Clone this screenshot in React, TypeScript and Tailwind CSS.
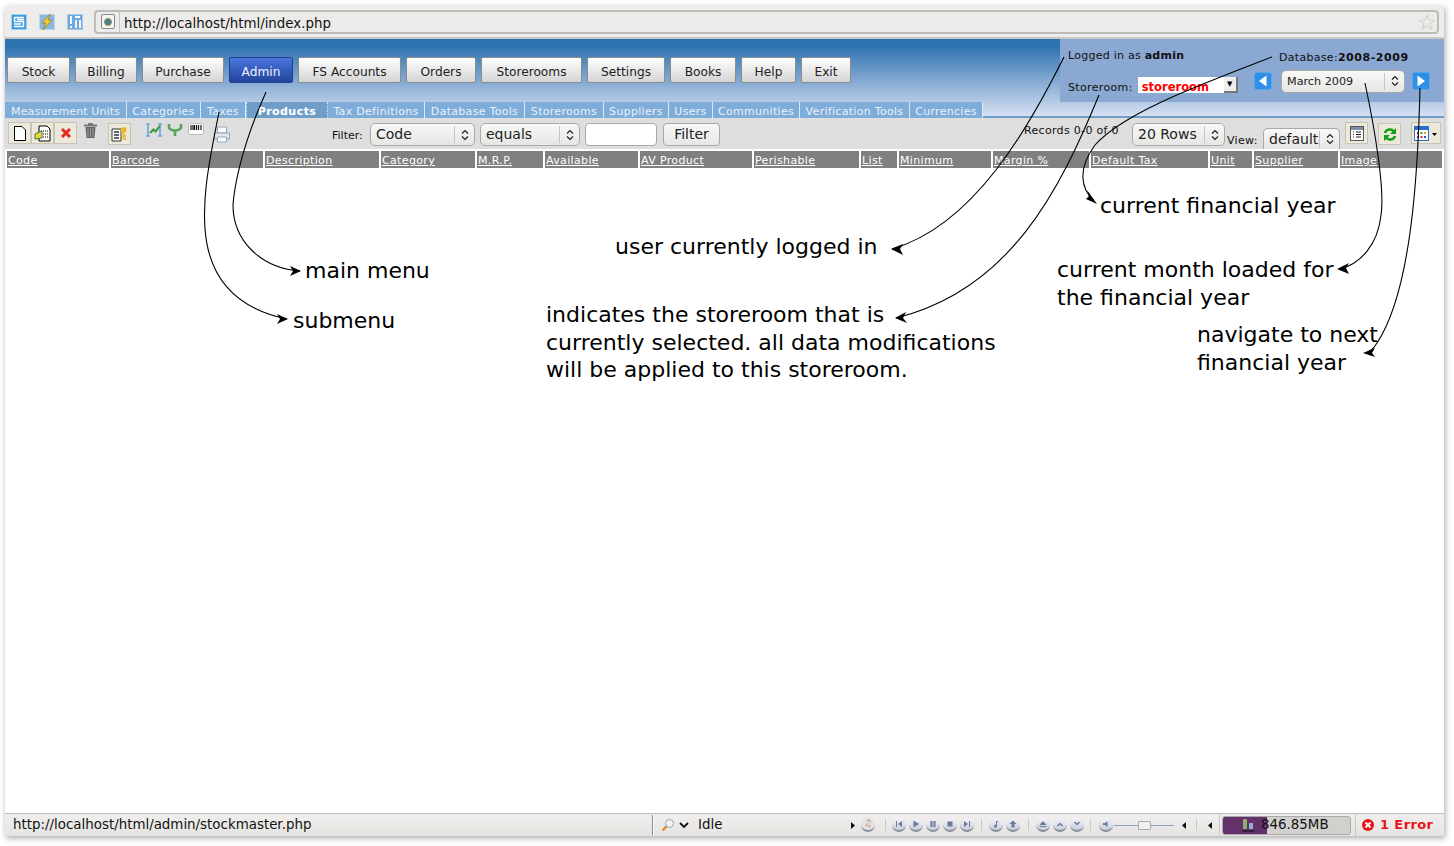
import type { ReactNode } from 'react';

const menuItems = [
  { label: 'Stock', width: 'w-[63px]' },
  { label: 'Billing', width: 'w-[62px]' },
  { label: 'Purchase', width: 'w-[82px]' },
  { label: 'Admin', width: 'w-[64px]', active: true },
  { label: 'FS Accounts', width: 'w-[103px]' },
  { label: 'Orders', width: 'w-[70px]' },
  { label: 'Storerooms', width: 'w-[101px]' },
  { label: 'Settings', width: 'w-[78px]' },
  { label: 'Books', width: 'w-[66px]' },
  { label: 'Help', width: 'w-[55px]' },
  { label: 'Exit', width: 'w-[50px]' },
];

const subItems = [
  { label: 'Measurement Units', width: 'w-[122px] tracking-[0.1px]' },
  { label: 'Categories', width: 'w-[74px] tracking-[0.3px]' },
  { label: 'Taxes', width: 'w-[45px] tracking-[0.3px]' },
  { label: 'Products', width: 'w-[82px] tracking-[0.45px]', active: true },
  { label: 'Tax Definitions', width: 'w-[97px] tracking-[0.3px]' },
  { label: 'Database Tools', width: 'w-[100px] tracking-[0.3px]' },
  { label: 'Storerooms', width: 'w-[79px] tracking-[0.3px]' },
  { label: 'Suppliers', width: 'w-[65px] tracking-[0.3px]' },
  { label: 'Users', width: 'w-[44px] tracking-[0.3px]' },
  { label: 'Communities', width: 'w-[87px] tracking-[0.3px]' },
  { label: 'Verification Tools', width: 'w-[110px] tracking-[0.3px]' },
  { label: 'Currencies', width: 'w-[73px] tracking-[0.3px]' },
];

const columns = [
  'Code', 'Barcode', 'Description', 'Category', 'M.R.P.', 'Available', 'AV Product', 'Perishable',
  'List', 'Minimum', 'Margin %', 'Default Tax', 'Unit', 'Supplier', 'Image',
];

const notes = [
  { text: 'main menu', className: 'left-[305px] top-[257px]' },
  { text: 'submenu', className: 'left-[293px] top-[307px]' },
  { text: 'user currently logged in', className: 'left-[615px] top-[233px]' },
  { text: 'indicates the storeroom that is\ncurrently selected. all data modifications\nwill be applied to this storeroom.', className: 'left-[546px] top-[301px]' },
  { text: 'current financial year', className: 'left-[1100px] top-[192px]' },
  { text: 'current month loaded for\nthe financial year', className: 'left-[1057px] top-[256px]' },
  { text: 'navigate to next\nfinancial year', className: 'left-[1197px] top-[321px]' },
];

const arrows = [
  { d: 'M219 112 C204 190 176 296 287 319', head: '288,319 277,314 280,319 277,324' },
  { d: 'M266 92 C240 150 234 190 233 205 C233 240 260 268 300 271', head: '301,271 290,266 293,271 290,276' },
  { d: 'M1064 57 C1030 125 975 225 892 249', head: '891,249 903,244 900,249 903,255' },
  { d: 'M1099 95 C1060 190 1010 290 896 318', head: '895,318 906,312 903,318 907,323' },
  { d: 'M1272 57 C1200 85 1125 112 1095 145 C1078 168 1080 188 1094 201', head: '1097,204 1086,199 1089,196 1087,190' },
  { d: 'M1365 83 C1375 130 1385 190 1381 215 C1378 245 1360 264 1340 269', head: '1337,269 1349,263 1346,268 1349,274' },
  { d: 'M1420 88 C1418 170 1412 290 1377 343 C1373 349 1371 351 1366 353', head: '1363,353 1375,348 1372,353 1375,357' },
];

function Select({ label, className, textClass = 'text-[14px]' }: { label: string; className: string; textClass?: string }) {
  return (
    <div className={`flex items-center rounded-[5px] border border-[#a9a9a5] bg-gradient-to-b from-[#f8f8f7] to-[#e6e6e4] ${className}`}>
      <span className={`flex-1 truncate pl-[5px] text-[#222] ${textClass}`}>{label}</span>
      <span className="flex h-[17px] w-[20px] items-center justify-center border-l border-[#c4c4c0]">
        <svg width="8" height="12" viewBox="0 0 8 12" fill="none" stroke="#222" strokeWidth="1.2">
          <path d="M1 4.5 4 1.5 7 4.5M1 7.5 4 10.5 7 7.5" />
        </svg>
      </span>
    </div>
  );
}

function ToolButton({ children, className = '' }: { children: ReactNode; className?: string }) {
  return (
    <div className={`flex items-center justify-center border border-[#c8c4b4] bg-[#ece8da] ${className}`}>{children}</div>
  );
}

function MediaButton({ children }: { children: ReactNode }) {
  return (
    <span className="flex size-[14px] items-center justify-center rounded-full border-b-2 border-[#8b8f99] bg-gradient-to-b from-[#f2f4f8] to-[#c9cede]">
      <svg width="8" height="8" viewBox="0 0 8 8" fill="#6c7a96">{children}</svg>
    </span>
  );
}

function Caret({ left = false, className = '' }: { left?: boolean; className?: string }) {
  return (
    <svg className={`shrink-0 ${className}`} width="4" height="7" viewBox="0 0 4 7" fill="#111">
      <path d={left ? 'M4 0V7L0 3.500Z' : 'M0 0V7L4 3.500Z'} />
    </svg>
  );
}

function Divider({ className }: { className: string }) {
  return <span className={`h-[12px] w-px shrink-0 bg-[#c8c8c4] ${className}`} />;
}

function Note({ text, className }: { text: string; className: string }) {
  return (
    <p className={`absolute whitespace-pre text-[22px] leading-[27.5px] text-black ${className}`}>{text}</p>
  );
}

export default function App() {
  return (
    <div className="relative h-[846px] w-[1454px] overflow-hidden bg-white font-['DejaVu_Sans',sans-serif]">
      <div className="mx-[5px] mt-[6px] mb-[10px] flex h-[830px] w-[1439px] flex-col bg-white shadow-[1px_2px_6px_rgba(0,0,0,0.35)]">
        {/* browser toolbar */}
        <div className="flex h-[33px] shrink-0 items-center border-b-2 border-[#c9c8c4] bg-[#eeedeb] pl-[6px] pr-[5px]">
          <div className="flex w-[83px] shrink-0 items-center gap-[12px]">
            <svg width="16" height="16" viewBox="0 0 16 16">
              <rect x="0.5" y="0.5" width="15" height="15" fill="#3f9be0" stroke="#9fd0f0" />
              <path d="M13 3.500H3.500V7.500H12.500V12.500H3M6 5.500H13M3 10H10" fill="none" stroke="#fff" strokeWidth="1.400" />
            </svg>
            <svg width="16" height="16" viewBox="0 0 16 16">
              <rect x="0.5" y="0.5" width="15" height="15" fill="#8db8de" stroke="#c0d6e8" />
              <path d="M11 0 3 9H7L4 16 13 6H9Z" fill="#f3d03e" stroke="#8c7a24" strokeWidth="0.7" />
            </svg>
            <svg width="16" height="16" viewBox="0 0 16 16">
              <rect x="0.5" y="0.5" width="15" height="15" fill="#6fa8dc" stroke="#a8cbe6" />
              <path d="M4 2V10M4 12V14M8 3H13M9 6V14M13 6V14" fill="none" stroke="#fff" strokeWidth="1.800" />
            </svg>
          </div>
          <div className="flex h-[24px] flex-1 items-center rounded-[4px] border-2 border-[#bdbcb8] bg-[#ecebe9]">
            <span className="flex h-[20px] w-[24px] shrink-0 items-center border-r border-[#c4c3bf] pl-[5px]">
              <span className="flex h-[15px] w-[14px] items-center justify-center rounded-[2px] border border-[#888] bg-[#f4f4f4]">
                <span className="size-[8px] rounded-full border border-[#a8923a] bg-[#3f7f9e]" />
              </span>
            </span>
            <span className="flex-1 pl-[4px] pt-[4px] text-[13.400px] leading-[16px] text-[#111]">http://localhost/html/index.php</span>
            <svg className="mr-[2px]" width="16" height="16" viewBox="0 0 24 24" fill="none" stroke="#d3d2ce" strokeWidth="1.800">
              <path d="m12 2 3 7 7.500 .6-5.700 4.900 1.800 7.500L12 18l-6.600 4 1.800-7.500L1.500 9.600 9 9Z" />
            </svg>
          </div>
        </div>

        {/* blue application header */}
        <header className="relative h-[79px] shrink-0 bg-gradient-to-b from-[#2e74b2] from-10% to-[#dbe4f4]">
          <div className="flex justify-between">
            <nav className="ml-[2px] mt-[18px] flex gap-[5px]">
              {menuItems.map((item) => (
                <div
                  key={item.label}
                  className={`flex h-[26px] items-center justify-center rounded-[2px] border pt-[4px] text-[12.200px] ${item.width} ${
                    item.active
                      ? 'border-[#23418f] bg-gradient-to-b from-[#4a76dd] to-[#23449c] text-[#eef]'
                      : 'border-[#8b8b8b] bg-gradient-to-b from-[#ffffff] to-[#d4d4d4] text-[#222]'
                  }`}
                >
                  {item.label}
                </div>
              ))}
            </nav>
            <aside className="flex h-[63px] w-[384px] bg-[#8aa8d2] text-[11px] text-[#111]">
              <div className="ml-[8px] flex w-[186px] flex-col">
                <p className="mt-[9px] leading-[16px] tracking-[0.25px]">
                  Logged in as <b>admin</b>
                </p>
                <div className="mt-[13px] flex items-start">
                  <span className="pt-[3px] leading-[16px] tracking-[0.35px]">Storeroom:</span>
                  <div className="relative ml-[5px] flex h-[16px] w-[100px] items-center bg-white pl-[4px] pt-[6px] text-[11.500px] font-bold text-[#f00]">
                    storeroom
                    <span className="absolute right-0 top-0 flex h-[16px] w-[14px] items-center justify-center border-b-2 border-r-2 border-[#777] bg-[#eee] text-[7px] text-black">
                      ▼
                    </span>
                  </div>
                </div>
              </div>
              <div className="flex flex-col">
                <p className="mt-[11px] ml-[25px] tracking-[0.3px]">
                  Database:<b className="tracking-[0.55px]">2008-2009</b>
                </p>
                <div className="mt-[3px] flex items-center">
                  <svg width="18" height="18" viewBox="0 0 18 18">
                    <rect x=".5" y=".5" width="17" height="17" rx="2" fill="#2f8fe6" stroke="#5aa8ec" />
                    <path d="M12.500 3.500V14.500L5 9Z" fill="#fff" />
                  </svg>
                  <Select label="March 2009" className="ml-[9px] h-[23px] w-[124px]" textClass="pt-[2px] text-[11.200px]" />
                  <svg className="ml-[7px]" width="18" height="18" viewBox="0 0 18 18">
                    <rect x=".5" y=".5" width="17" height="17" rx="2" fill="#2f8fe6" stroke="#5aa8ec" />
                    <path d="M5.500 3.500V14.500L13 9Z" fill="#fff" />
                  </svg>
                </div>
              </div>
            </aside>
          </div>
          {/* submenu */}
          <nav className="absolute bottom-0 left-0 flex h-[16px] w-full items-start border-b-2 border-[#6f9fc9]">
            {subItems.map((item) => (
              <div
                key={item.label}
                className={`flex h-[16px] shrink-0 items-center justify-center border-r border-[#dce7f3] pt-[4px] text-[11px] text-[#e9f0f9] ${item.width} ${
                  item.active ? 'border-l border-dotted bg-[#6f9fc9] font-bold text-white' : 'bg-[#7fadd9]'
                }`}
              >
                {item.label}
              </div>
            ))}
          </nav>
        </header>

        {/* list toolbar */}
        <div className="flex h-[31px] shrink-0 items-start bg-[#dedede]">
          <div className="ml-[3px] mt-[4px] flex h-[22px] shrink-0 w-[70px]">
            <ToolButton className="w-[23px]">
              <svg width="12" height="15" viewBox="0 0 12 15" fill="#fff" stroke="#000">
                <path d="M.5.500H8L11.500 4V14.500H.5Z" />
              </svg>
            </ToolButton>
            <ToolButton className="w-[23px]">
              <svg width="17" height="17" viewBox="0 0 17 17">
                <path d="M5 1H13L16 4V16H5Z" fill="#fff" stroke="#000" />
                <path d="M7 6H14M7 9H14M7 12H14" stroke="#000" strokeDasharray="1 1" />
                <path d="M1 9 8 6V13L1 14Z" fill="#efd33c" stroke="#3c7a3c" />
              </svg>
            </ToolButton>
            <ToolButton className="w-[23px]">
              <svg width="10" height="10" viewBox="0 0 10 10" stroke="#e8281c" strokeWidth="3">
                <path d="M1 1 9 9M9 1 1 9" />
              </svg>
            </ToolButton>
          </div>
          <svg className="ml-[5px] mt-[4px] shrink-0" width="15" height="16" viewBox="0 0 15 16">
            <path d="M1 2.500H14V4.500H1Z M5 1H10V2.500H5Z" fill="#777" />
            <path d="M2.500 5H12.500L11.500 16H3.500Z" fill="#666" />
            <path d="M5 6V15M7.500 6V15M10 6V15" stroke="#999" />
          </svg>
          <ToolButton className="ml-[10px] mt-[5px] h-[22px] w-[23px] shrink-0">
            <svg width="17" height="16" viewBox="0 0 17 16">
              <path d="M1 3H10V15H1Z" fill="#fff" stroke="#333" />
              <path d="M3 6H8M3 9H8M3 12H8" stroke="#333" strokeWidth="1.500" />
              <circle cx="12.500" cy="4" r="3" fill="#edb92c" />
              <path d="M12.500 6V13M12.500 10H15M12.500 13H15" stroke="#edb92c" strokeWidth="1.800" />
            </svg>
          </ToolButton>
          <svg className="ml-[14px] mt-[5px] shrink-0" width="18" height="14" viewBox="0 0 18 14">
            <path d="M1 1H5M3 1V13M1 13H5M13 1H17M15 1V13M13 13H17" stroke="#6fa6de" strokeWidth="1.600" fill="none" />
            <path d="M5 10 8.500 6.500 10.500 8.500 15 3" stroke="#3a9a3a" strokeWidth="2" fill="none" />
          </svg>
          <svg className="ml-[4px] mt-[5px] shrink-0" width="16" height="14" viewBox="0 0 16 14" fill="none" stroke="#5aa55a" strokeWidth="2.600">
            <path d="M2 1V4C2 7 8 7.500 8 7.500S14 7 14 4V1M8 7.500V13" />
          </svg>
          <svg className="ml-[5px] mt-[5px] shrink-0" width="16" height="12" viewBox="0 0 16 12">
            <rect x=".5" y=".5" width="15" height="11" rx="2" fill="#fff" stroke="#bbb" />
            <path d="M3 2V7M5 2V7M6.500 2V7M8.500 2V7M10.500 2V7M13 2V7" stroke="#111" strokeWidth="1.200" />
          </svg>
          <svg className="ml-[9px] mt-[8px] shrink-0" width="18" height="17" viewBox="0 0 18 17" fill="#e5e5e5" stroke="#8aa3c2">
            <path d="M4.500 1H13.500V7H4.500Z" fill="#fff" />
            <path d="M1.500 7H16.500V13H1.500Z" />
            <path d="M4.500 11H13.500V16H4.500Z" fill="#fff" />
          </svg>
          <span className="ml-[101px] mt-[10px] w-[38px] shrink-0 text-[11px] text-[#111]">Filter:</span>
          <Select label="Code" className="mt-[5px] h-[23px] w-[105px] shrink-0" />
          <Select label="equals" className="ml-[5px] mt-[5px] h-[23px] w-[100px] shrink-0" />
          <div className="ml-[5px] mt-[5px] h-[23px] w-[72px] shrink-0 rounded-[4px] border border-[#a9a9a5] bg-white" />
          <div className="ml-[6px] mt-[5px] flex h-[23px] w-[57px] shrink-0 items-center justify-center rounded-[4px] border border-[#a9a9a5] bg-gradient-to-b from-[#f8f8f7] to-[#e6e6e4] text-[14px] text-[#222]">
            Filter
          </div>
          <span className="ml-[304px] mt-[5px] w-[108px] shrink-0 whitespace-nowrap text-[11px] tracking-[0.32px] text-[#111]">Records 0-0 of 0</span>
          <Select label="20 Rows" className="mt-[5px] h-[23px] w-[93px] shrink-0" />
          <span className="ml-[2px] mt-[15px] w-[36px] shrink-0 text-[11px] tracking-[0.3px] text-[#111]">View:</span>
          <Select label="default" className="mt-[10px] h-[21px] w-[77px] shrink-0 rounded-b-none border-b-0" />
          <ToolButton className="ml-[5px] mt-[4px] h-[22px] w-[23px] shrink-0">
            <svg width="14" height="15" viewBox="0 0 14 15">
              <rect x=".5" y=".5" width="13" height="14" fill="#fff" stroke="#555" />
              <rect x="1" y="1" width="12" height="3" fill="#7b8fa8" />
              <path d="M3 6H4M6 6H11M3 8.500H4M6 8.500H11M3 11H4M6 11H11" stroke="#222" />
            </svg>
          </ToolButton>
          <ToolButton className="ml-[10px] mt-[5px] h-[22px] w-[23px] shrink-0">
            <svg width="14" height="15" viewBox="0 0 14 15" fill="none" stroke="#12a012" strokeWidth="2.400">
              <path d="M2 6C3 2 9 1 11 5M12 9C11 13 5 14 3 10" />
              <path d="M13 1V7H7Z M1 14V8H7Z" fill="#12a012" stroke="none" />
            </svg>
          </ToolButton>
          <ToolButton className="ml-[10px] mt-[4px] h-[22px] w-[30px] shrink-0">
            <svg width="24" height="15" viewBox="0 0 24 15">
              <rect x=".5" y=".5" width="14" height="14" fill="#fff" stroke="#2a6ec8" />
              <rect x="1" y="1" width="13" height="3" fill="#2a6ec8" />
              <path d="M3 6H5V8H3Z" fill="#d22" />
              <path d="M6.500 6H8.500V8H6.500Z" fill="#2a2" />
              <path d="M10 6H12V8H10Z" fill="#e5a11c" />
              <path d="M3 10H5V12H3Z" fill="#25c" />
              <path d="M6.500 10H8.500V12H6.500Z" fill="#d22" />
              <path d="M10 10H12V12H10Z" fill="#25c" />
              <path d="M18 7H23L20.500 10Z" fill="#000" />
            </svg>
          </ToolButton>
        </div>

        {/* table header */}
        <div className="ml-[2px] mt-[2px] grid h-[17px] w-[1435px] shrink-0 grid-cols-[102px_152px_114px_94px_66px_93px_112px_105px_36px_92px_96px_117px_42px_84px_102px] gap-x-[2px]">
          {columns.map((col) => (
            <div key={col} className="bg-[#808080] pl-[1px] pt-[2px] text-[11px] tracking-[0.35px] text-white">
              <span className="underline">{col}</span>
            </div>
          ))}
        </div>

        <main className="flex-1 bg-white" />

        {/* browser status bar */}
        <footer className="flex h-[23px] shrink-0 items-center border-t border-[#bdbcb8] bg-gradient-to-b from-[#f0efed] to-[#e5e4e1] text-[13.400px] text-[#111]">
          <span className="ml-[8px] w-[639px] shrink-0">http://localhost/html/admin/stockmaster.php</span>
          <span className="h-[20px] w-[2px] shrink-0 border-l border-r border-l-[#888] border-r-white" />
          <svg className="ml-[7px] shrink-0" width="14" height="14" viewBox="0 0 14 14" fill="none">
            <circle cx="8.500" cy="5.500" r="4" fill="#f2f2f2" stroke="#8aa" />
            <path d="M5.500 8.500 1.500 12.500" stroke="#e58a1f" strokeWidth="2.400" />
          </svg>
          <svg className="ml-[4px] shrink-0" width="10" height="7" viewBox="0 0 10 7" fill="none" stroke="#111" strokeWidth="1.800">
            <path d="M1 1 5 5 9 1" />
          </svg>
          <span className="ml-[9px] w-[153px] shrink-0">Idle</span>
          <Caret />
          <span className="ml-[6px] flex size-[14px] shrink-0 items-center justify-center rounded-full border-b-2 border-[#8b8f99] bg-[#dfe3ec] text-[9px] font-bold text-[#e8801e]">♫</span>
          <Divider className="ml-[10px]" />
          <div className="ml-[6px] flex shrink-0 gap-[3px]">
            <MediaButton><path d="M1 1H2V7H1ZM7 1V7L3 4Z" /></MediaButton>
            <MediaButton><path d="M1.500 .5V7.500L7 4Z" /></MediaButton>
            <MediaButton><path d="M1.500 1H3.500V7H1.500ZM4.500 1H6.500V7H4.500Z" /></MediaButton>
            <MediaButton><path d="M1.500 1.500H6.500V6.500H1.500Z" /></MediaButton>
            <MediaButton><path d="M1 1V7L5 4ZM6 1H7V7H6Z" /></MediaButton>
          </div>
          <Divider className="ml-[7px]" />
          <div className="ml-[7px] flex shrink-0 gap-[3px]">
            <MediaButton><path d="M4 1H6V2H5V6A1.500 1.500 0 1 1 4 4.800Z" /></MediaButton>
            <MediaButton><path d="M4 .5 7.500 4H5.500V7.500H2.500V4H.5Z" /></MediaButton>
          </div>
          <Divider className="ml-[8px]" />
          <div className="ml-[7px] flex shrink-0 gap-[3px]">
            <MediaButton><path d="M4 1 7.500 5H.5ZM.5 6H7.500V7H.5Z" /></MediaButton>
            <MediaButton><path d="M1 5.500 4 2.500 7 5.500 6 6.500 4 4.500 2 6.500Z" /></MediaButton>
            <MediaButton><path d="M1 2.500 4 5.500 7 2.500 6 1.500 4 3.500 2 1.500Z" /></MediaButton>
          </div>
          <Divider className="ml-[6px]" />
          <div className="ml-[8px] shrink-0">
            <MediaButton><path d="M1 3H3L5.500 1V7L3 5H1Z" /></MediaButton>
          </div>
          <div className="relative ml-[1px] h-[1px] w-[60px] shrink-0 bg-[#8fa3c4]">
            <span className="absolute left-[24px] top-[-4px] h-[9px] w-[13px] rounded-[1px] border border-[#a8a8a4] bg-[#f1f0ee]" />
          </div>
          <Caret left className="ml-[8px]" />
          <Divider className="ml-[10px]" />
          <Caret left className="ml-[11px]" />
          <div className="ml-[7px] flex h-[23px] w-[137px] shrink-0 items-center border-l border-r border-[#c8c8c4] pl-[2px]">
            <div className="relative flex h-[19px] w-[129px] items-center overflow-hidden rounded-[3px] border border-[#aaa] bg-[#d2d0cd]">
              <span className="absolute inset-y-0 left-0 w-[44px] bg-[#65316b]" />
              <svg className="relative ml-[19px]" width="13" height="14" viewBox="0 0 13 14">
                <path d="M1 1H5V11H1Z" fill="#8fb06a" />
                <path d="M7 5H11V11H7Z" fill="#8fb0d0" />
                <path d="M0 13H13" stroke="#111" />
              </svg>
              <span className="relative ml-[6px]">846.85MB</span>
            </div>
          </div>
          <div className="ml-[6px] flex items-center gap-[6px] text-[13px] font-bold tracking-[0.4px] text-[#e8141c]">
            <svg width="12" height="12" viewBox="0 0 12 12">
              <circle cx="6" cy="6" r="6" fill="#e8141c" />
              <path d="M3.500 3.500 8.500 8.500M8.500 3.500 3.500 8.500" stroke="#fff" strokeWidth="1.800" />
            </svg>
            1 Error
          </div>
        </footer>
      </div>

      {/* hand-drawn annotations over the screenshot */}
      <svg className="pointer-events-none absolute left-0 top-0" width="1454" height="846" viewBox="0 0 1454 846" fill="none">
        {arrows.map((a) => (
          <g key={a.d}>
            <path d={a.d} stroke="#000" strokeWidth="1.100" />
            <polygon points={a.head} fill="#000" />
          </g>
        ))}
      </svg>
      {notes.map((n) => (
        <Note key={n.text} text={n.text} className={n.className} />
      ))}
    </div>
  );
}
